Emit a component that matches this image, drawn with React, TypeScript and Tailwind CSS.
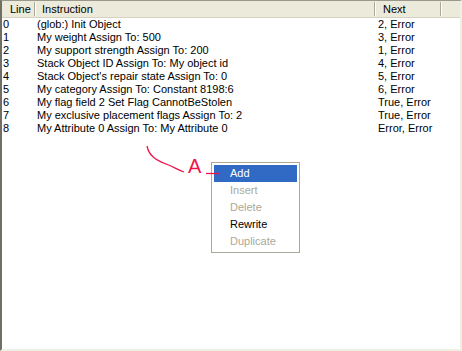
import React from "react";

const rows: [string, string, string][] = [
  ["0", "(glob:) Init Object", "2, Error"],
  ["1", "My weight Assign To: 500", "3, Error"],
  ["2", "My support strength Assign To: 200", "1, Error"],
  ["3", "Stack Object ID Assign To: My object id", "4, Error"],
  ["4", "Stack Object's repair state Assign To: 0", "5, Error"],
  ["5", "My category Assign To: Constant 8198:6", "6, Error"],
  ["6", "My flag field 2 Set Flag CannotBeStolen", "True, Error"],
  ["7", "My exclusive placement flags Assign To: 2", "True, Error"],
  ["8", "My Attribute 0 Assign To: My Attribute 0", "Error, Error"],
];

const menu: { label: string; state: "sel" | "dis" | "on" }[] = [
  { label: "Add", state: "sel" },
  { label: "Insert", state: "dis" },
  { label: "Delete", state: "dis" },
  { label: "Rewrite", state: "on" },
  { label: "Duplicate", state: "dis" },
];

function Sep() {
  return <div className="w-[2px] h-[14px] self-center border-l border-l-[#aca899] border-r border-r-white shrink-0" />;
}

export default function App() {
  return (
    <div
      className="relative w-[462px] h-[351px] bg-white border-t border-t-[#9a988c] border-l-2 border-l-[#716f64] border-r-2 border-r-[#f1efe2] border-b-2 border-b-[#f1efe2] overflow-hidden text-[11px] text-black"
      style={{ fontFamily: '"Liberation Sans", Arial, sans-serif' }}
    >
      <div className="flex h-[17px] bg-[#ebeadb] border-b border-b-[#d6d2c2] leading-[17px]">
        <div className="w-[32px] pl-[8px]">Line</div>
        <Sep />
        <div className="w-[338px] pl-[6px]">Instruction</div>
        <Sep />
        <div className="w-[64px] pl-[7px]">Next</div>
        <Sep />
        <div className="flex-1" />
      </div>
      <div className="flex flex-col">
        {rows.map((r) => (
          <div key={r[0]} className="flex h-[13px] leading-[13px] whitespace-nowrap">
            <div className="w-[34px] pl-[1px]">{r[0]}</div>
            <div className="w-[340px] pl-[1px]">{r[1]}</div>
            <div className="w-[66px] pl-[2px]">{r[2]}</div>
          </div>
        ))}
      </div>

      <div className="absolute left-[209px] top-[161px] w-[89px] h-[91px] bg-white border border-[#aca899] p-[2px] flex flex-col">
        {menu.map((m) => (
          <div
            key={m.label}
            className={
              "h-[17px] leading-[17px] pl-[16px] " +
              (m.state === "sel"
                ? "bg-[#316ac5] text-white"
                : m.state === "dis"
                ? "text-[#aca899]"
                : "text-black")
            }
          >
            {m.label}
          </div>
        ))}
      </div>

      <svg className="absolute left-[-2px] top-[-1px] pointer-events-none" width="462" height="351" viewBox="0 0 462 351">
        <path d="M147 146 C149 156 156 160 166 164 C174 167 178 170 184 172" fill="none" stroke="#f0144a" strokeWidth="1.3" />
        <line x1="206" y1="173.5" x2="219" y2="173.5" stroke="#f0144a" strokeWidth="1.3" />
      </svg>
      <div
        className="absolute left-[186px] top-[155px] text-[20px] leading-[20px] text-[#f0144a]"
        style={{ fontFamily: '"Liberation Sans", Arial, sans-serif' }}
      >
        A
      </div>
    </div>
  );
}
